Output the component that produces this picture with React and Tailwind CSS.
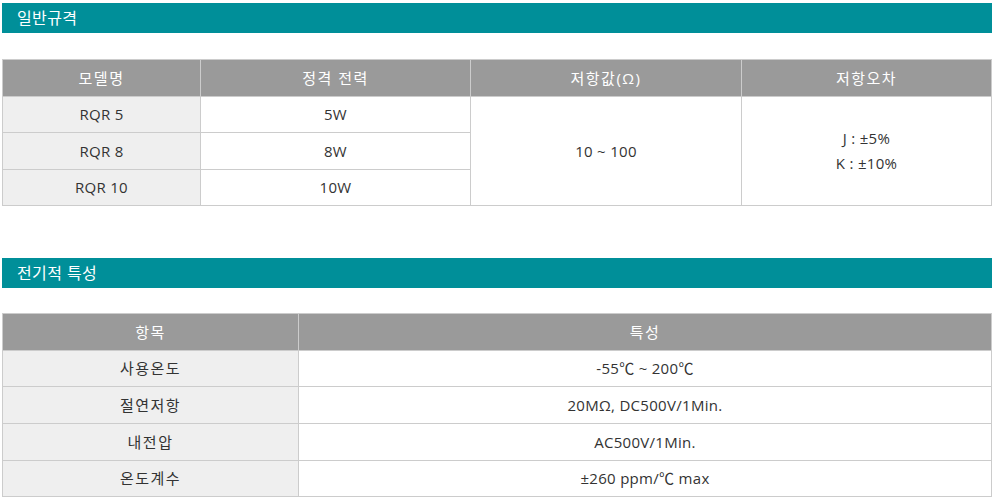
const specRows = [
  { model: "RQR 5", power: "5W", h: "h-[36px]" },
  { model: "RQR 8", power: "8W", h: "h-[37px]" },
  { model: "RQR 10", power: "10W", h: "h-[36px]" },
];

const elecRows = [
  { item: "사용온도", value: "-55℃ ~ 200℃", h: "h-[36px]" },
  { item: "절연저항", value: "20MΩ, DC500V/1Min.", h: "h-[37px]" },
  { item: "내전압", value: "AC500V/1Min.", h: "h-[37px]" },
  { item: "온도계수", value: "±260 ppm/℃ max", h: "h-[36px]" },
];

function SectionTitle({ children }) {
  return (
    <div className="h-[30px] bg-[#008f99] pl-[15px] flex items-center text-white text-[16px] tracking-[0.4px]">
      {children}
    </div>
  );
}

const th = "border border-[#cccccc] bg-[#9a9a9a] text-white font-normal p-0 tracking-[1.5px]";
const td = "border border-[#cccccc] p-0";
const ko = "tracking-[1.5px]";
const en = "tracking-[0.3px]";

export default function App() {
  return (
    <div
      className="w-[996px] h-[500px] bg-white px-[2px] pt-[3px] text-[15px] text-[#333333]"
      style={{ fontFamily: '"Open Sans", "Noto Sans CJK KR", sans-serif' }}
    >
      <div className="w-[990px]">
        <SectionTitle>일반규격</SectionTitle>

        <table className="mt-[26px] w-full border-collapse table-fixed text-center">
          <colgroup>
            <col className="w-[198px]" />
            <col className="w-[270px]" />
            <col className="w-[271px]" />
            <col />
          </colgroup>
          <thead>
            <tr className="h-[37px]">
              <th className={th}>모델명</th>
              <th className={th}>정격 전력</th>
              <th className={th}>저항값(Ω)</th>
              <th className={th}>저항오차</th>
            </tr>
          </thead>
          <tbody>
            {specRows.map((r, i) => (
              <tr key={r.model} className={r.h}>
                <td className={`${td} ${en} bg-[#efefef]`}>{r.model}</td>
                <td className={`${td} ${en}`}>{r.power}</td>
                {i === 0 && (
                  <>
                    <td className={`${td} ${en}`} rowSpan={3}>10 ~ 100</td>
                    <td className={`${td} ${en} leading-[25px]`} rowSpan={3}>
                      <div>J : ±5%</div>
                      <div>K : ±10%</div>
                    </td>
                  </>
                )}
              </tr>
            ))}
          </tbody>
        </table>

        <div className="mt-[52px]">
          <SectionTitle>전기적 특성</SectionTitle>
        </div>

        <table className="mt-[25px] w-full border-collapse table-fixed text-center">
          <colgroup>
            <col className="w-[296px]" />
            <col />
          </colgroup>
          <thead>
            <tr className="h-[37px]">
              <th className={th}>항목</th>
              <th className={th}>특성</th>
            </tr>
          </thead>
          <tbody>
            {elecRows.map((r) => (
              <tr key={r.item} className={r.h}>
                <td className={`${td} ${ko} bg-[#efefef]`}>{r.item}</td>
                <td className={`${td} ${en}`}>{r.value}</td>
              </tr>
            ))}
          </tbody>
        </table>
      </div>
    </div>
  );
}
